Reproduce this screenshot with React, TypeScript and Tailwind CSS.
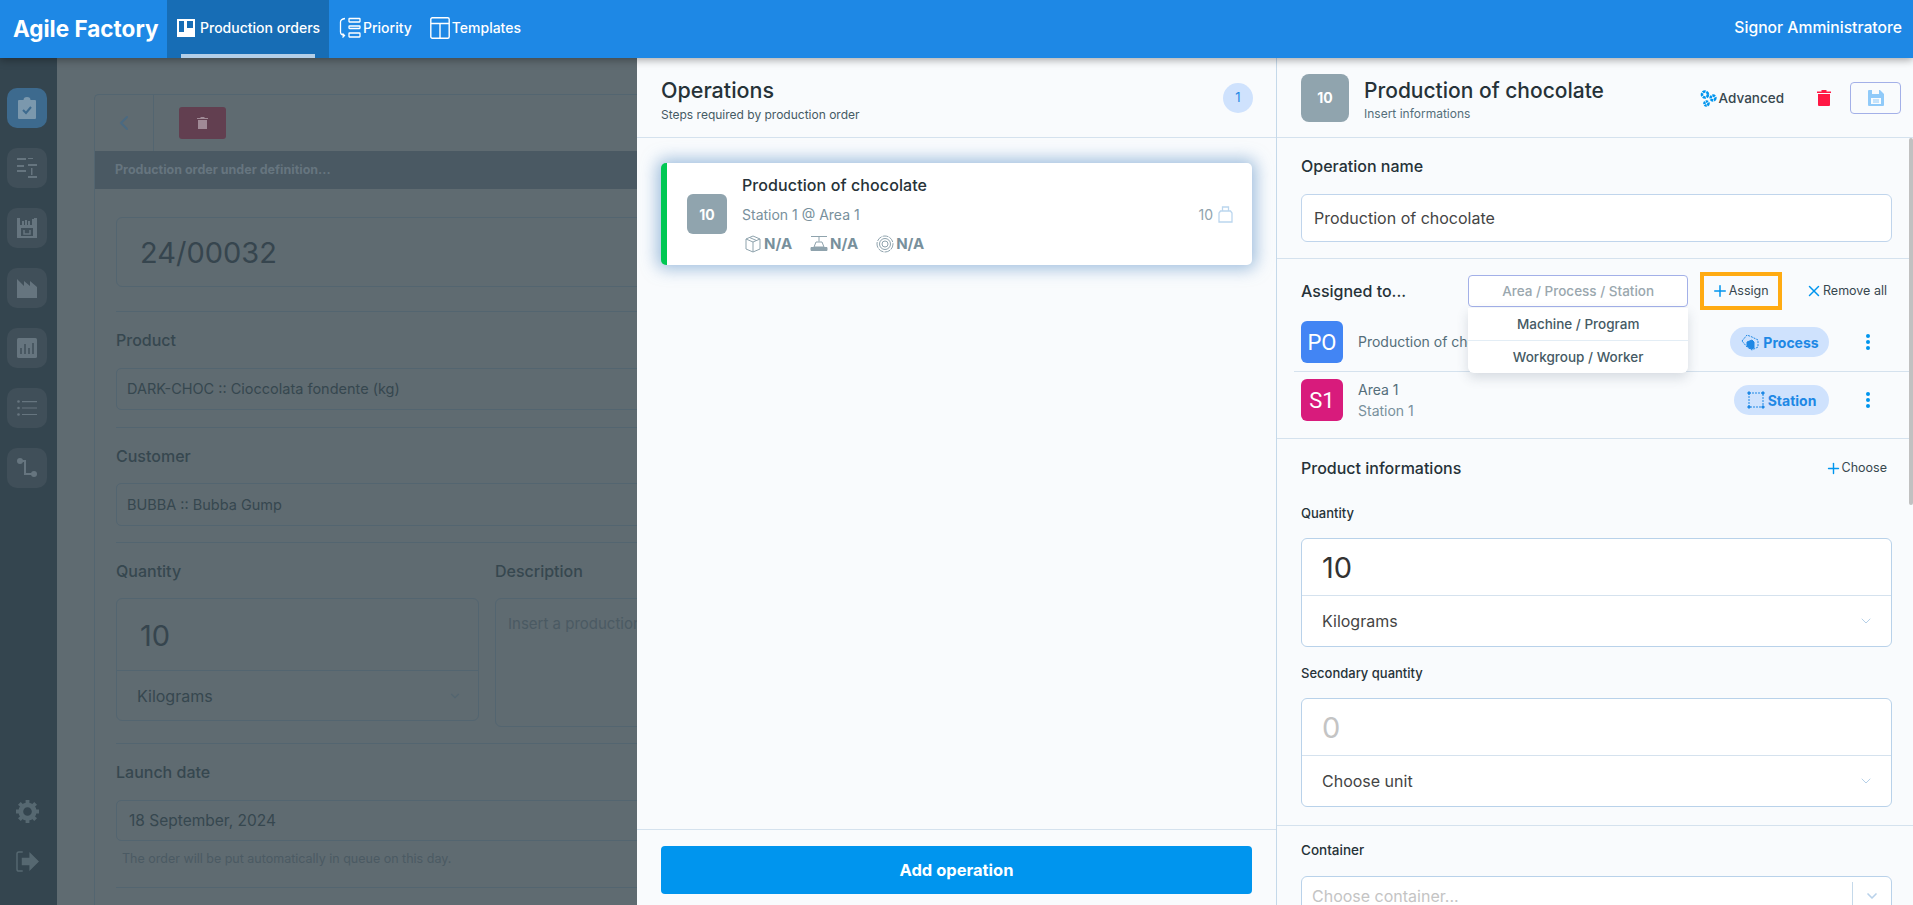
import React from 'react';
import { ChevronDown, ChevronLeft, Plus, X } from 'lucide-react';

const BoardIcon = (): React.JSX.Element => (
  <svg width="18" height="18" viewBox="0 0 18 18" className="shrink-0">
    <path d="M0 0h18v18H0z M2 2v11h5V2z M10 2v7h6V2z" fill="#fff" fillRule="evenodd" />
  </svg>
);

const PriorityIcon = (): React.JSX.Element => (
  <svg width="22" height="22" viewBox="0 0 22 22" fill="none" stroke="#fff" strokeWidth="1.3" className="shrink-0">
    <rect x="10" y="1.5" width="11" height="3.5" rx="0.5" />
    <rect x="10" y="9" width="11" height="2.5" rx="0.5" />
    <rect x="10" y="16" width="11" height="4" rx="0.5" />
    <path d="M6 1.5C3 2 1.5 3 1.5 5v10c0 2 1 3 3.500 3.500M3.500 16.500l2 2-2 2" />
  </svg>
);

const TemplateIcon = (): React.JSX.Element => (
  <svg width="20" height="22" viewBox="0 0 20 22" fill="none" stroke="#fff" strokeWidth="1.4" className="shrink-0">
    <rect x="0.800" y="0.800" width="18.400" height="20.400" rx="1.500" />
    <path d="M1 6.500h18M10 6.500v14.500" />
  </svg>
);

const Tile = ({ active, children }: { active?: boolean; children: React.ReactNode }): React.JSX.Element => (
  <div
    className={`flex h-10 w-10 items-center justify-center rounded-[10px] ${active ? 'bg-[#3d6a8e]' : 'bg-[#404f59]'}`}
  >
    {children}
  </div>
);

const Sidebar = (): React.JSX.Element => (
  <aside className="flex h-full w-[57px] shrink-0 flex-col items-start bg-[#34454f] pl-[7px] pt-[30px]">
    <div className="flex flex-col gap-5">
      <Tile active>
        <svg width="18" height="22" viewBox="0 0 18 22">
          <path d="M1 3h4.500a3.500 3 0 0 1 7 0H17a1 1 0 0 1 1 1v17a1 1 0 0 1-1 1H1a1 1 0 0 1-1-1V4a1 1 0 0 1 1-1z" fill="#7b98ad" />
          <path d="M5 13l3 3 5-6" fill="none" stroke="#3d6a8e" strokeWidth="2" />
        </svg>
      </Tile>
      <Tile>
        <svg width="20" height="20" viewBox="0 0 20 20" fill="#66757f">
          <path d="M0 0h9v2H0zM0 12h9v2H0zM11 18h9v2h-9zM11 6h9v2h-9z" />
          <path d="M0 7h7v2H0zM14 10h1.500v7H14zM11 0h5v1h-5z" />
        </svg>
      </Tile>
      <Tile>
        <svg width="20" height="20" viewBox="0 0 20 20">
          <path d="M0 0h3v7h2V3h2v4h1V2h2v5h1V3h2v4h2V1h2V0h3v20H0z" fill="#66757f" />
          <path d="M4 10h12v8H4z" fill="#404f59" />
          <path d="M7 12v4h6v-4" fill="none" stroke="#66757f" strokeWidth="1.500" />
        </svg>
      </Tile>
      <Tile>
        <svg width="20" height="20" viewBox="0 0 20 20">
          <path d="M0 1l7 7V3l6 5V3l7 6v11H0z" fill="#66757f" />
        </svg>
      </Tile>
      <Tile>
        <svg width="20" height="20" viewBox="0 0 20 20">
          <rect width="20" height="20" rx="1.500" fill="#66757f" />
          <path d="M4 10v6M8 6v10M12 10v6M16 5v11" stroke="#404f59" strokeWidth="1.500" />
        </svg>
      </Tile>
      <Tile>
        <svg width="20" height="16" viewBox="0 0 20 16" fill="#66757f">
          <circle cx="1.500" cy="1.500" r="1.300" />
          <circle cx="1.500" cy="8" r="1.300" />
          <circle cx="1.500" cy="14.500" r="1.300" />
          <path d="M5 1h15v1.200H5zM5 7.400h15v1.200H5zM5 13.900h15v1.200H5z" />
        </svg>
      </Tile>
      <Tile>
        <svg width="20" height="20" viewBox="0 0 20 20" fill="none">
          <path d="M3 3h5v13h8" stroke="#66757f" strokeWidth="2" />
          <circle cx="3" cy="3" r="3" fill="#66757f" />
          <circle cx="17" cy="16" r="3" fill="#66757f" />
        </svg>
      </Tile>
    </div>
    <div className="mt-[312px] flex w-10 flex-col items-center gap-[28px]">
      <svg width="23" height="23" viewBox="0 0 24 24" fill="none" stroke="#566871">
        <circle cx="12" cy="12" r="7" strokeWidth="5" />
        <path d="M12 0v5M12 19v5M0 12h5M19 12h5M3.500 3.500l3.500 3.500M17 17l3.500 3.500M20.500 3.500L17 7M7 17l-3.500 3.500" strokeWidth="4" />
      </svg>
      <svg width="23" height="21" viewBox="0 0 24 22">
        <path d="M7 1H3a2 2 0 0 0-2 2v16a2 2 0 0 0 2 2h4" fill="none" stroke="#566871" strokeWidth="1.500" />
        <path d="M6 7h8V1l10 10-10 10v-6H6z" fill="#566871" />
      </svg>
    </div>
  </aside>
);

const DimLabel = ({ className, children }: { className?: string; children: React.ReactNode }): React.JSX.Element => (
  <div className={`text-[16px] leading-5 font-medium text-[#36474f] ${className ?? ''}`}>{children}</div>
);

const DimSelect = ({ text, className }: { text: string; className?: string }): React.JSX.Element => (
  <div className={`flex h-[42px] w-[600px] items-center rounded-[5px] border border-[#536570] pl-[10px] ${className ?? ''}`}>
    <span className="text-[14.500px] text-[#36474f]">{text}</span>
    <X size={13} strokeWidth={2.5} className="ml-auto mr-[11px] text-[#4f6069]" />
    <span className="h-6 w-px bg-[#536570]" />
  </div>
);

const DimPage = (): React.JSX.Element => (
  <section className="h-full w-[580px] shrink-0 overflow-hidden bg-[#5f6b71] pl-[37px] pt-9">
    <div className="h-[900px] w-[600px] rounded-tl-[5px] border-l border-t border-[#536570]">
      <div className="flex h-[56px] items-center">
        <div className="flex h-full w-[59px] items-center justify-center border-r border-[#536570]">
          <ChevronLeft size={24} strokeWidth={2} className="text-[#4a6a82]" />
        </div>
        <div className="ml-[25px] flex h-8 w-[47px] items-center justify-center rounded-[3px] bg-[#623f50]">
          <svg width="11" height="12" viewBox="0 0 11 12" fill="#a08a96">
            <path d="M0 1h3.500V0h4v1H11v1H0zM1 3h9v9H1z" />
          </svg>
        </div>
      </div>
      <div className="flex h-[38px] items-center bg-[#4a5963] pl-5 text-[12.500px] font-bold text-[#66757f]">
        Production order under definition...
      </div>
      <div className="px-[21px] pt-[28px]">
        <div className="flex h-[70px] items-center rounded-[6px] border border-[#536570] pl-[23px] pt-[2px] text-[29px] text-[#36454e]">
          24/00032
        </div>
        <div className="mt-6 h-px bg-[#536570]" />
        <DimLabel className="mt-[18px]">Product</DimLabel>
        <DimSelect className="mt-[18px]" text="DARK-CHOC :: Cioccolata fondente (kg)" />
        <div className="mt-[17px] h-px bg-[#536570]" />
        <DimLabel className="mt-[18px]">Customer</DimLabel>
        <DimSelect className="mt-[17px] h-[43px]" text="BUBBA :: Bubba Gump" />
        <div className="mt-4 h-px bg-[#536570]" />
        <div className="mt-[18px] flex gap-4">
          <div className="w-[363px] shrink-0">
            <DimLabel>Quantity</DimLabel>
            <div className="mt-[17px] h-[123px] rounded-[6px] border border-[#536570]">
              <div className="flex h-[72px] items-center border-b border-[#536570] pl-[23px] pt-[2px] text-[29px] text-[#36454e]">
                10
              </div>
              <div className="flex h-[50px] items-center justify-between pl-[20px] pr-4">
                <span className="text-[16px] text-[#36474f]">Kilograms</span>
                <ChevronDown size={14} className="text-[#536570]" />
              </div>
            </div>
          </div>
          <div className="flex-1">
            <DimLabel>Description</DimLabel>
            <div className="mt-[17px] h-[129px] rounded-[6px] border border-[#536570] pl-[12px] pt-[14px] text-[15px] whitespace-nowrap text-[#4b5a63]">
              Insert a production description
            </div>
          </div>
        </div>
        <div className="mt-4 h-px bg-[#536570]" />
        <DimLabel className="mt-[18px]">Launch date</DimLabel>
        <div className="mt-[18px] flex h-[41px] items-center rounded-[5px] border border-[#536570] pl-[12px] text-[15.500px] text-[#36474f]">
          18 September, 2024
        </div>
        <div className="mt-[10px] pl-[6px] text-[12.500px] leading-4 text-[#4b5a63]">
          The order will be put automatically in queue on this day.
        </div>
        <div className="mt-[20px] h-px bg-[#536570]" />
      </div>
    </div>
  </section>
);

const NA = ({ icon }: { icon: React.ReactNode }): React.JSX.Element => (
  <div className="flex items-center gap-[2px]">
    {icon}
    <span className="text-[15px] font-bold text-[#78909c]">N/A</span>
  </div>
);

const OperationsPanel = (): React.JSX.Element => (
  <section className="flex h-full w-[640px] shrink-0 flex-col border-r border-[#c5d9ea] bg-[#f9fbfd]">
    <div className="flex h-[80px] shrink-0 items-center justify-between border-b border-[#d5e2ee] pl-6 pr-[23px] pt-[5px]">
      <div>
        <div className="text-[21.500px] leading-[26px] font-medium text-[#263238]">Operations</div>
        <div className="mt-1 text-[12px] leading-4 text-[#455a64]">Steps required by production order</div>
      </div>
      <div className="-mt-[5px] flex h-[30px] w-[30px] items-center justify-center rounded-full bg-[#cfe2fd] text-[13px] text-[#1e88e5]">
        1
      </div>
    </div>
    <div className="flex-1 px-6 pt-[25px]">
      <div className="flex h-[102px] overflow-hidden rounded-[5px] border-l-[6px] border-[#00c853] bg-white shadow-[0_0_16px_4px_rgba(100,150,200,0.6)]">
        <div className="ml-5 mt-[31px] flex h-10 w-10 shrink-0 items-center justify-center rounded-[6px] bg-[#90a4ae] text-[14px] font-bold text-white">
          10
        </div>
        <div className="ml-[15px] flex-1 pt-[10px]">
          <div className="text-[16px] leading-6 font-medium tracking-[0.1px] text-[#263238]">Production of chocolate</div>
          <div className="mt-2 text-[14px] leading-5 text-[#78909c]">Station 1 @ Area 1</div>
          <div className="mt-2 flex items-center gap-[18px] pl-[2px]">
            <NA
              icon={
                <svg width="18" height="18" viewBox="0 0 18 18" fill="none" stroke="#8fa3ad">
                  <path d="M9 1l7 3v10l-7 3-7-3V4zM2 4l7 3 7-3M9 7v10M5.500 2.500l7 3" />
                </svg>
              }
            />
            <NA
              icon={
                <svg width="18" height="18" viewBox="0 0 18 18" fill="none" stroke="#8fa3ad">
                  <path d="M1 1.500h16M9 1.500v5M6 7h6l2 5H4z" />
                  <path d="M1 12.500h16v3H1z" fill="#8fa3ad" />
                </svg>
              }
            />
            <NA
              icon={
                <svg width="18" height="18" viewBox="0 0 18 18" fill="none" stroke="#8fa3ad">
                  <circle cx="9" cy="9" r="8" strokeDasharray="6 1" />
                  <circle cx="9" cy="9" r="5.500" />
                  <circle cx="9" cy="9" r="3" />
                </svg>
              }
            />
          </div>
        </div>
        <div className="mr-[19px] flex items-center gap-[5px] self-center text-[14px] text-[#90a4ae]">
          10
          <svg width="15" height="17" viewBox="0 0 15 17" fill="none" stroke="#bbd6ee" strokeWidth="1.300">
            <path d="M4.500 1h6v4h-6zM2.500 5h10l1.500 2v9H1V7z" />
          </svg>
        </div>
      </div>
    </div>
    <div className="flex h-[76px] shrink-0 items-start border-t border-[#d5e2ee] px-6 pt-4">
      <div className="flex h-12 w-full items-center justify-center rounded-[4px] bg-[#0095ee] text-[16.500px] font-bold text-white">
        Add operation
      </div>
    </div>
  </section>
);

const Pill = ({ label, icon, className }: { label: string; icon: React.ReactNode; className: string }): React.JSX.Element => (
  <div className={`flex h-[30px] items-center justify-center gap-[3px] rounded-full bg-[#cfe2fd] text-[14px] font-bold text-[#1e88e5] ${className}`}>
    {icon}
    {label}
  </div>
);

const Kebab = (): React.JSX.Element => (
  <div className="ml-[37px] mr-[6px] flex flex-col gap-[2px]">
    <span className="h-1 w-1 rounded-full bg-[#0095ee]" />
    <span className="h-1 w-1 rounded-full bg-[#0095ee]" />
    <span className="h-1 w-1 rounded-full bg-[#0095ee]" />
  </div>
);

const QuantityBox = ({ value, unit, muted }: { value: string; unit: string; muted?: boolean }): React.JSX.Element => (
  <div className="mt-4 h-[109px] rounded-[6px] border border-[#b9d2ea] bg-white">
    <div
      className={`flex h-[57px] items-center border-b border-[#d5e2ee] pl-5 pt-[2px] text-[29px] ${muted ? 'text-[#c4c4c4]' : 'text-[#333]'}`}
    >
      {value}
    </div>
    <div className="flex h-[50px] items-center justify-between pl-5 pr-[17px]">
      <span className="text-[16px] text-[#444]">{unit}</span>
      <ChevronDown size={16} strokeWidth={1} className="text-[#90b8dc]" />
    </div>
  </div>
);

const DetailPanel = (): React.JSX.Element => (
  <section className="relative h-full min-w-0 flex-1 overflow-hidden bg-[#f9fbfd]">
    <div className="flex h-[80px] items-center border-b border-[#d5e2ee] pl-6 pr-3">
      <div className="flex h-12 w-12 items-center justify-center rounded-[8px] bg-[#90a4ae] text-[14px] font-bold text-white">
        10
      </div>
      <div className="ml-[15px] pt-1">
        <div className="text-[21px] leading-7 font-medium text-[#263238]">Production of chocolate</div>
        <div className="mt-[1px] text-[12px] leading-4 text-[#546e7a]">Insert informations</div>
      </div>
      <div className="ml-auto flex items-center pt-[1px]">
        <svg width="17" height="17" viewBox="0 0 17 17" fill="none" stroke="#0095ee" strokeWidth="2.600">
          <circle cx="5" cy="4.500" r="3" strokeDasharray="3 0.800" />
          <circle cx="13" cy="8" r="2.400" strokeDasharray="2.500 0.700" />
          <circle cx="6.500" cy="13.500" r="2" strokeDasharray="2 0.600" />
        </svg>
        <span className="ml-[2px] text-[13.500px] font-medium text-[#37474f]">Advanced</span>
        <svg width="14" height="16" viewBox="0 0 14 16" fill="#ff1744" className="ml-[33px]">
          <path d="M0 1.500h4.500V0h5v1.500H14V3H0zM1 4h12v11a1 1 0 0 1-1 1H2a1 1 0 0 1-1-1z" />
        </svg>
        <div className="ml-[19px] flex h-8 w-[51px] items-center justify-center rounded-[4px] border border-[#a3b0e8]">
          <svg width="16" height="16" viewBox="0 0 16 16">
            <path d="M1 0h11l4 4v11a1 1 0 0 1-1 1H1a1 1 0 0 1-1-1V1a1 1 0 0 1 1-1z" fill="#90caf9" />
            <path d="M3 8h10v6H3zM4 0h7v4H4z" fill="#f9fbfd" />
            <path d="M5 10h6M5 12h6" stroke="#90caf9" />
          </svg>
        </div>
      </div>
    </div>

    <div className="absolute right-0 top-[80px] h-[367px] w-1 rounded-sm bg-[#c1c1c1]" />

    <div className="pl-6 pr-[21px]">
      <div className="pt-[18px] text-[16px] leading-5 font-medium text-[#263238]">Operation name</div>
      <div className="mt-[18px] flex h-12 items-center rounded-[6px] border border-[#c0d5ec] bg-white pl-3 text-[16px] text-[#444]">
        Production of chocolate
      </div>
    </div>

    <div className="mt-4 border-t border-[#d5e2ee]">
      <div className="flex h-[62px] items-center pl-6 pr-[26px] pt-[2px]">
        <span className="text-[16px] font-medium text-[#263238]">Assigned to...</span>
        <div className="relative ml-[62px]">
          <div className="flex h-[32px] w-[220px] items-center justify-center rounded-[4px] border border-[#a3b0e8] bg-white text-[13.500px] font-medium text-[#9aa7ae]">
            Area / Process / Station
          </div>
          <div className="absolute left-0 top-[33px] z-10 w-[220px] rounded-b-[6px] bg-white text-center text-[13.500px] font-medium text-[#455a64] shadow-[0_5px_12px_rgba(60,80,100,0.18)]">
            <div className="flex h-[33px] items-center justify-center border-b border-[#e3edf5]">Machine / Program</div>
            <div className="flex h-[32px] items-center justify-center">Workgroup / Worker</div>
          </div>
        </div>
        <div className="ml-3 flex h-[38px] w-[82px] items-center justify-center border-[4px] border-[#ffab12] pr-[3px] text-[12.500px] text-[#37474f]">
          <Plus size={18} strokeWidth={2} className="text-[#0095ee]" />
          Assign
        </div>
        <div className="ml-auto flex items-center text-[12.500px] text-[#37474f]">
          <X size={18} strokeWidth={2} className="text-[#0095ee]" />
          Remove all
        </div>
      </div>

      <div className="ml-[17px] flex h-[51px] items-start border-b border-[#d5e2ee] pl-[7px] pr-[37px]">
        <div className="flex h-[42px] w-[42px] shrink-0 items-center justify-center rounded-[6px] bg-[#4285f4] font-['Roboto',sans-serif] text-[22px] text-white">
          PO
        </div>
        <span className="ml-[15px] mt-[10px] text-[14px] text-[#546e7a]">Production of chocolate</span>
        <div className="ml-auto mt-[6px] flex items-center">
          <Pill
            label="Process"
            className="w-[99px]"
            icon={
              <svg width="20" height="18" viewBox="0 0 20 18" fill="none" stroke="#1e88e5">
                <path d="M2 8l5-6 5 2 6 3v7l-6 3-5-3z" strokeDasharray="2 1" />
                <path d="M7 9l5-2 2 2v6l-3 1-4-3z" fill="#1e88e5" />
              </svg>
            }
          />
          <Kebab />
        </div>
      </div>

      <div className="flex h-[66px] items-start pl-6 pr-[37px] pt-[7px]">
        <div className="flex h-[42px] w-[42px] shrink-0 items-center justify-center rounded-[6px] bg-[#d81b7c] font-['Roboto',sans-serif] text-[22px] text-white">
          S1
        </div>
        <div className="ml-[15px] mt-[1px]">
          <div className="text-[14px] leading-5 text-[#546e7a]">Area 1</div>
          <div className="mt-[1px] text-[14px] leading-5 text-[#78909c]">Station 1</div>
        </div>
        <div className="ml-auto mt-[6px] flex items-center">
          <Pill
            label="Station"
            className="w-[95px]"
            icon={
              <svg width="18" height="18" viewBox="0 0 18 18" fill="none" stroke="#1e88e5">
                <path d="M2 2h14v14H2z" strokeDasharray="2 1" />
                <path d="M1 1h2v2H1zM15 1h2v2h-2zM1 15h2v2H1zM15 15h2v2h-2z" fill="#1e88e5" />
              </svg>
            }
          />
          <Kebab />
        </div>
      </div>
    </div>

    <div className="border-t border-[#d5e2ee] pl-6 pr-[21px]">
      <div className="flex items-center justify-between pr-[5px] pt-[19px]">
        <span className="text-[16px] leading-5 font-medium text-[#263238]">Product informations</span>
        <span className="flex items-center text-[12.500px] leading-5 text-[#37474f]">
          <Plus size={17} strokeWidth={2} className="text-[#0095ee]" />
          Choose
        </span>
      </div>
      <div className="mt-[26px] text-[13px] leading-[18px] font-medium text-[#263238]">Quantity</div>
      <QuantityBox value="10" unit="Kilograms" />
      <div className="mt-[17px] text-[13px] leading-[18px] font-medium text-[#263238]">Secondary quantity</div>
      <QuantityBox value="0" unit="Choose unit" muted />
    </div>

    <div className="mt-[18px] border-t border-[#d5e2ee] pl-6 pr-[21px]">
      <div className="mt-[15px] text-[13.500px] leading-[18px] font-medium text-[#263238]">Container</div>
      <div className="mt-[17px] flex h-10 items-center rounded-[6px] border border-[#b9d2ea] bg-white pl-[10px]">
        <span className="text-[16px] text-[#c4c4c4]">Choose container...</span>
        <span className="ml-auto h-7 w-px bg-[#c5d9ea]" />
        <ChevronDown size={16} strokeWidth={2.500} className="mx-[11px] text-[#b9d2ea]" />
      </div>
    </div>
  </section>
);

export default function App(): React.JSX.Element {
  return (
    <div className="flex h-[905px] w-[1913px] flex-col overflow-hidden font-['Inter',sans-serif]">
      <header className="relative z-20 flex h-[58px] shrink-0 items-stretch bg-[#1e88e5] text-white shadow-[0_2px_8px_rgba(0,0,0,0.35)]">
        <div className="flex w-[167px] items-center pl-[13px] text-[22.500px] font-bold">Agile Factory</div>
        <div className="relative flex w-[162px] items-center gap-[5px] bg-[#176db5] pb-[3px] pl-[10px] text-[14px] font-medium">
          <BoardIcon />
          Production orders
          <span className="absolute bottom-0 left-[14px] h-1 w-[134px] bg-[#b3cfe8]" />
        </div>
        <div className="ml-[10px] flex items-center gap-[2px] pb-[3px] text-[14px] font-medium">
          <PriorityIcon />
          Priority
        </div>
        <div className="ml-[18px] flex items-center gap-[2px] pb-[3px] text-[14px] font-medium">
          <TemplateIcon />
          Templates
        </div>
        <div className="ml-auto flex items-center pb-[2px] pr-[11px] text-[15.700px] font-medium">
          Signor Amministratore
        </div>
      </header>
      <main className="flex min-h-0 flex-1">
        <Sidebar />
        <DimPage />
        <OperationsPanel />
        <DetailPanel />
      </main>
    </div>
  );
}
